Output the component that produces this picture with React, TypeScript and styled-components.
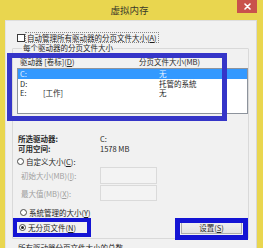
import React from "react";
import styled, { createGlobalStyle } from "styled-components";

const Global = createGlobalStyle`
  html, body { margin: 0; padding: 0; background: #e9d64f; }
  body { width: 263px; height: 248px; overflow: hidden; }
  * { box-sizing: border-box; }
`;

const FONT = `"Noto Sans CJK SC", "Noto Sans", sans-serif`;

const Window = styled.div`
  position: relative;
  width: 263px;
  height: 248px;
  overflow: hidden;
  background: #e9d64f;
  display: flex;
  flex-direction: column;
  font-family: ${FONT};
  font-size: 7.5px;
  color: #1e1e1e;
`;

const TitleBar = styled.div`
  height: 20px;
  flex: none;
  display: flex;
  align-items: center;
  justify-content: center;
  padding-right: 4px;
  font-size: 9.5px;
  color: #3a3a2a;
`;

const CloseButton = styled.div`
  position: absolute;
  top: 0;
  left: 237px;
  width: 20px;
  height: 13px;
  background: #c9524c;
  display: flex;
  align-items: center;
  justify-content: center;
`;

const Body = styled.div`
  flex: 1;
  margin: 0 6px 0 5px;
  background: #f1f1f1;
  border-top: 1px solid #dedede;
  border-left: 1px solid #e4e4e4;
  border-right: 1px solid #d8d8d8;
  padding-top: 11px;
  display: flex;
  flex-direction: column;
`;

const CheckRow = styled.div`
  height: 11px;
  display: flex;
  align-items: center;
  padding-left: 11px;
`;

const CheckBox = styled.span`
  width: 8px;
  height: 8px;
  border: 1px solid #3a3a3a;
  background: #fff;
  flex: none;
`;

const FocusLabel = styled.span`
  height: 11px;
  display: flex;
  align-items: center;
  padding: 0 1px;
  border: 1px dotted #8a8a8a;
  white-space: nowrap;
`;

const Group = styled.fieldset`
  margin: 0 0 0 6px;
  width: 237px;
  border: 1px solid #d9d9d9;
  border-radius: 1px;
  padding: 3px 3px 4px 4px;
  min-width: 0;
`;

const Legend = styled.legend`
  padding: 0 1px;
  margin-left: 5px;
  height: 10px;
  line-height: 10px;
  white-space: nowrap;
`;

const ListHeader = styled.div`
  height: 10px;
  display: grid;
  grid-template-columns: 119px 1fr;
  align-items: center;
  padding-left: 3px;
  color: #2a2a2a;
`;

const ListBox = styled.div`
  margin-top: 2px;
  height: 46px;
  width: 231px;
  border: 1px solid #8d939c;
  background: #fff;
`;

const Row = styled.div<{ $selected?: boolean }>`
  height: 9.5px;
  display: grid;
  grid-template-columns: 23px 116px 1fr;
  align-items: center;
  padding-left: 2px;
  line-height: 9.5px;
  white-space: nowrap;
  background: ${(p) => (p.$selected ? "#3399ff" : "transparent")};
  color: ${(p) => (p.$selected ? "#eaf3ff" : "#1e1e1e")};
`;

const InfoGrid = styled.div`
  margin-top: 19px;
  margin-left: 1px;
  display: grid;
  grid-template-columns: 82px 1fr;
  grid-auto-rows: 10px;
  align-items: center;
`;

const Strong = styled.span`
  font-weight: 600;
  color: #2a2a2a;
`;

const RadioRow = styled.div<{ $indent: number; $top: number }>`
  height: 10px;
  margin-top: ${(p) => p.$top}px;
  padding-left: ${(p) => p.$indent}px;
  display: flex;
  align-items: center;
  gap: 2px;
  white-space: nowrap;
`;

const Radio = styled.span<{ $checked?: boolean }>`
  width: 7px;
  height: 7px;
  border-radius: 50%;
  border: 1px solid #4a4a4a;
  background: #fff;
  flex: none;
  display: flex;
  align-items: center;
  justify-content: center;
  &::after {
    content: "";
    width: 3px;
    height: 3px;
    border-radius: 50%;
    background: ${(p) => (p.$checked ? "#222" : "transparent")};
  }
`;

const FieldRow = styled.div<{ $h: number; $top: number }>`
  height: ${(p) => p.$h}px;
  margin-top: ${(p) => p.$top}px;
  display: grid;
  grid-template-columns: 79px 57px;
  align-items: center;
  padding-left: 4px;
  color: #a0a0a0;
  white-space: nowrap;
`;

const InputBox = styled.span`
  height: 100%;
  border: 1px solid #dadada;
  background: #f3f3f3;
`;

const BottomRow = styled.div`
  margin-top: 3px;
  height: 14px;
  display: flex;
  align-items: center;
  justify-content: space-between;
  padding-right: 3px;
`;

const Button = styled.div`
  width: 61px;
  height: 14px;
  border: 1px solid #acacac;
  background: linear-gradient(#f2f2f2, #e3e3e3);
  display: flex;
  align-items: center;
  justify-content: center;
  color: #2a2a2a;
`;

const NextGroupLabel = styled.div`
  margin-top: 4px;
  padding-left: 12px;
  white-space: nowrap;
  line-height: 10px;
`;

const Mark = styled.div<{ $l: number; $t: number; $w: number; $h: number; $b: number; $c: string }>`
  position: absolute;
  left: ${(p) => p.$l}px;
  top: ${(p) => p.$t}px;
  width: ${(p) => p.$w}px;
  height: ${(p) => p.$h}px;
  border: ${(p) => p.$b}px solid ${(p) => p.$c};
  pointer-events: none;
`;

export default function App() {
  return (
    <>
      <Global />
      <Window>
        <TitleBar>虚拟内存</TitleBar>
        <CloseButton>
          <svg width="7" height="7" viewBox="0 0 7 7">
            <path d="M1 1 L6 6 M6 1 L1 6" stroke="#fff" strokeWidth="1.6" strokeLinecap="round" />
          </svg>
        </CloseButton>
        <Body>
          <CheckRow>
            <CheckBox />
            <FocusLabel>自动管理所有驱动器的分页文件大小(<u>A</u>)</FocusLabel>
          </CheckRow>
          <Group>
            <Legend>每个驱动器的分页文件大小</Legend>
            <ListHeader>
              <span>驱动器 [卷标](<u>D</u>)</span>
              <span>分页文件大小(MB)</span>
            </ListHeader>
            <ListBox>
              <Row $selected>
                <span>C:</span>
                <span></span>
                <span>无</span>
              </Row>
              <Row>
                <span>D:</span>
                <span></span>
                <span>托管的系統</span>
              </Row>
              <Row>
                <span>E:</span>
                <span>[工作]</span>
                <span>无</span>
              </Row>
            </ListBox>
            <InfoGrid>
              <Strong>所选驱动器:</Strong>
              <span>C:</span>
              <Strong>可用空间:</Strong>
              <span>1578 MB</span>
            </InfoGrid>
            <RadioRow $indent={0} $top={3}>
              <Radio />
              <span>自定义大小(<u>C</u>):</span>
            </RadioRow>
            <FieldRow $h={17} $top={1}>
              <span>初始大小(MB)(<u>I</u>):</span>
              <InputBox />
            </FieldRow>
            <FieldRow $h={16} $top={1}>
              <span>最大值(MB)(<u>X</u>):</span>
              <InputBox />
            </FieldRow>
            <RadioRow $indent={3} $top={6}>
              <Radio />
              <span>系統管理的大小(<u>Y</u>)</span>
            </RadioRow>
            <BottomRow>
              <RadioRow $indent={2} $top={0}>
                <Radio $checked />
                <span>无分页文件(<u>N</u>)</span>
              </RadioRow>
              <Button>设置(<u>S</u>)</Button>
            </BottomRow>
          </Group>
          <NextGroupLabel>所有驱动器分页文件大小的总数</NextGroupLabel>
        </Body>
        <Mark $l={7} $t={53} $w={220} $h={68} $b={5} $c="#3535c8" />
        <Mark $l={13} $t={218} $w={78} $h={19} $b={4} $c="#1414d4" />
        <Mark $l={175} $t={218} $w={73} $h={22} $b={5} $c="#1414d4" />
      </Window>
    </>
  );
}
